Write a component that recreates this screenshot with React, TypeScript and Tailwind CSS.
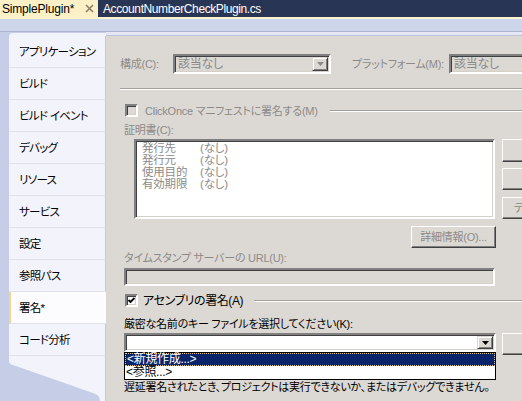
import React from "react";

const DIS = "text-[#8c8a88]";

function Arrow({ color }: { color: string }) {
  return (
    <svg width="7" height="4" viewBox="0 0 7 4">
      <polygon points="0,0 7,0 3.5,4" fill={color} />
    </svg>
  );
}

function DropBtn({ disabled }: { disabled?: boolean }) {
  return (
    <div className="w-[16px] h-full shrink-0 bg-[#dcd9d4] border border-t-[#dcd9d4] border-l-[#dcd9d4] border-r-[#404040] border-b-[#404040] shadow-[inset_1px_1px_0_#ffffff,inset_-1px_-1px_0_#808080] flex items-center justify-center">
      <Arrow color={disabled ? "#8c8a88" : "#000000"} />
    </div>
  );
}

function Checkbox({ checked }: { checked?: boolean }) {
  return (
    <div
      className={
        "w-[13px] h-[13px] shrink-0 border-2 border-t-[#808080] border-l-[#808080] border-b-white border-r-white shadow-[inset_1px_1px_0_#404040,inset_-1px_-1px_0_#d4d0c8] flex items-center justify-center " +
        (checked ? "bg-white" : "bg-[#dcd9d4]")
      }
    >
      {checked && (
        <svg width="9" height="9" viewBox="0 0 9 9">
          <path d="M1.5 4 L3.5 6 L7.5 2" stroke="#000" strokeWidth="1.8" fill="none" />
        </svg>
      )}
    </div>
  );
}

const navItems = [
  "アプリケーション",
  "ビルド",
  "ビルド イベント",
  "デバッグ",
  "リソース",
  "サービス",
  "設定",
  "参照パス",
  "署名*",
  "コード分析",
];

export default function App() {
  return (
    <div className="w-[522px] h-[401px] overflow-hidden flex flex-col bg-[#c6cee7] font-['Liberation_Sans','Noto_Sans_CJK_JP',sans-serif] [font-feature-settings:'palt'] text-[11px] tracking-[-0.25px] leading-[14px] text-black whitespace-nowrap">
      {/* document tabs */}
      <div className="h-[17px] shrink-0 flex bg-[#283554]">
        <div className="w-[98px] bg-[#fcf0c6] flex items-center pl-[2px] text-[12px] tracking-[-0.2px]">
          <span>SimplePlugin*</span>
          <svg className="ml-[11px]" width="9" height="9" viewBox="0 0 9 9">
            <path d="M1 1 L8 8 M8 1 L1 8" stroke="#8a806a" strokeWidth="1.6" />
          </svg>
        </div>
        <div className="pl-[5px] text-white flex items-center text-[12px] tracking-[-0.4px]">
          AccountNumberCheckPlugin.cs
        </div>
      </div>
      <div className="h-[2px] shrink-0 bg-[#fdf3cf]" />
      <div className="h-[12px] shrink-0 bg-[#cdd5ea]" />
      <div className="h-px shrink-0 bg-[#aab3cf]" />

      <div className="flex-1 flex min-h-0">
        {/* nav */}
        <div className="w-[106px] shrink-0 flex flex-col text-[11.5px] tracking-[-0.7px]">
          <div className="h-px shrink-0" />
          <div className="ml-[9px] flex flex-col bg-[#f3f3fb] rounded-tl-[4px] pt-[3px]">
            {navItems.map((t) => {
              const sel = t === "署名*";
              return (
                <div
                  key={t}
                  className={
                    "h-[32px] shrink-0 flex items-center border-b border-b-[#e0e1ee] " +
                    (sel
                      ? "bg-[#fcfcff] border-l-2 border-l-[#f2d68c] pl-[8px]"
                      : "pl-[10px] border-r border-r-[#c3c9de]")
                  }
                >
                  {t}
                </div>
              );
            })}
          </div>
          <svg className="ml-[9px] shrink-0" width="97" height="45" viewBox="0 0 97 45">
            <path
              d="M0 0 L0 5 Q0 8 4 9 L84 37 Q91 39 91 45 L97 45 L97 0 Z"
              fill="#f3f3fb"
            />
            <path d="M96.5 0 L96.5 45" stroke="#c3c9de" strokeWidth="1" />
          </svg>
        </div>

        {/* content */}
        <div className="flex-1 flex flex-col min-w-0">
          <div className="h-[4px] shrink-0 bg-[#e6e7f6] border-b border-b-[#bcc2d8]" />
          <div className="flex-1 bg-[#dcd9d4] pl-[14px] flex flex-col overflow-hidden">
            {/* row 1 */}
            <div className="mt-[18px] h-[20px] flex items-center shrink-0">
              <span className={"w-[53px] shrink-0 " + DIS}>構成(C):</span>
              <div className="w-[158px] h-[20px] shrink-0 flex items-center border-2 border-t-[#808080] border-l-[#808080] border-b-white border-r-white shadow-[inset_1px_1px_0_#404040,inset_-1px_-1px_0_#d4d0c8] p-[1px]">
                <span className={"flex-1 pl-[2px] text-[12px] " + DIS}>該当なし</span>
                <DropBtn disabled />
              </div>
              <span className={"ml-[21px] w-[97px] shrink-0 " + DIS}>プラットフォーム(M):</span>
              <div className="w-[120px] h-[20px] shrink-0 flex items-center border-2 border-t-[#808080] border-l-[#808080] border-b-white border-r-white shadow-[inset_1px_1px_0_#404040,inset_-1px_-1px_0_#d4d0c8] p-[1px]">
                <span className={"flex-1 pl-[2px] text-[12px] " + DIS}>該当なし</span>
              </div>
            </div>

            <div className="mt-[14px] h-[2px] shrink-0 border-t border-t-[#a09e9a] border-b border-b-white" />

            {/* ClickOnce */}
            <div className="mt-[14px] h-[13px] shrink-0 flex items-center pl-[5px]">
              <Checkbox />
              <span className={"ml-[7px] shrink-0 " + DIS}>ClickOnce マニフェストに署名する(M)</span>
              <div className="ml-[12px] flex-1 h-[2px] border-t border-t-[#a09e9a] border-b border-b-white" />
            </div>

            <div className={"mt-[6px] h-[14px] shrink-0 pl-[4px] " + DIS}>証明書(C):</div>

            <div className="mt-[2px] flex shrink-0">
              <div className="ml-[14px] w-[361px] h-[80px] shrink-0 bg-white border-2 border-t-[#808080] border-l-[#808080] border-b-white border-r-white shadow-[inset_1px_1px_0_#404040,inset_-1px_-1px_0_#d4d0c8] pt-[1px] pl-[6px] leading-[12px] text-[11.5px] tracking-[-0.2px]">
                {[
                  ["発行先", "(なし)"],
                  ["発行元", "(なし)"],
                  ["使用目的", "(なし)"],
                  ["有効期限", "(なし)"],
                ].map(([a, b]) => (
                  <div key={a} className={"flex h-[12px] " + DIS}>
                    <span className="w-[58px] shrink-0">{a}</span>
                    <span>{b}</span>
                  </div>
                ))}
              </div>
              <div className="ml-[7px] flex flex-col shrink-0">
                <div className="h-[23px] w-[130px] bg-[#dcd9d4] border border-t-white border-l-white border-r-[#404040] border-b-[#404040] shadow-[inset_-1px_-1px_0_#808080] flex items-center pl-[30px]">
                  <span className={DIS}>ストアから選択(S)...</span>
                </div>
                <div className="mt-[6px] h-[22px] w-[130px] bg-[#dcd9d4] border border-t-white border-l-white border-r-[#404040] border-b-[#404040] shadow-[inset_-1px_-1px_0_#808080] flex items-center pl-[30px]">
                  <span className={DIS}>ファイルから選択(I)...</span>
                </div>
                <div className="mt-[7px] h-[22px] w-[130px] bg-[#dcd9d4] border border-t-white border-l-white border-r-[#404040] border-b-[#404040] shadow-[inset_-1px_-1px_0_#808080] flex items-center pl-[11px]">
                  <span className={DIS}>テスト証明書の作成(T)...</span>
                </div>
              </div>
            </div>

            <div className="mt-[7px] ml-[291px] h-[22px] w-[85px] shrink-0 bg-[#dcd9d4] border border-t-white border-l-white border-r-[#404040] border-b-[#404040] shadow-[inset_-1px_-1px_0_#808080] flex items-center justify-center">
              <span className={DIS}>詳細情報(O)...</span>
            </div>

            <div className={"mt-[3px] h-[14px] shrink-0 pl-[4px] " + DIS}>タイムスタンプ サーバーの URL(U):</div>
            <div className="mt-[3px] ml-[4px] h-[18px] w-[371px] shrink-0 bg-[#dcd9d4] border-2 border-t-[#808080] border-l-[#808080] border-b-white border-r-white shadow-[inset_1px_1px_0_#404040,inset_-1px_-1px_0_#d4d0c8]" />

            {/* assembly sign */}
            <div className="mt-[8px] h-[13px] shrink-0 flex items-center pl-[5px]">
              <Checkbox checked />
              <span className="ml-[5px] shrink-0 text-[12px] tracking-[-0.4px]">アセンブリの署名(A)</span>
              <div className="ml-[11px] flex-1 h-[2px] border-t border-t-[#a09e9a] border-b border-b-white" />
            </div>

            <div className="mt-[10px] h-[14px] shrink-0 pl-[4px]">厳密な名前のキー ファイルを選択してください(K):</div>

            <div className="mt-[2px] flex shrink-0 relative">
              <div className="ml-[4px] w-[372px] h-[19px] shrink-0 bg-white flex border-2 border-t-[#808080] border-l-[#808080] border-b-white border-r-white shadow-[inset_1px_1px_0_#404040,inset_-1px_-1px_0_#d4d0c8] p-[1px] justify-end">
                <DropBtn />
              </div>
              <div className="ml-[6px] h-[22px] w-[40px] shrink-0 bg-[#dcd9d4] border border-t-white border-l-white border-r-[#404040] border-b-[#404040] shadow-[inset_-1px_-1px_0_#808080]" />
              <div className="absolute left-[4px] top-[19px] w-[372px] h-[28px] bg-white border border-black flex flex-col text-[12px] tracking-[-0.3px]">
                <div className="h-[13px] bg-[#0a246a] text-white border border-dotted border-[#d9c88a] leading-[11px] pl-px">
                  &lt;新規作成...&gt;
                </div>
                <div className="h-[13px] leading-[13px] pl-[1px]">&lt;参照...&gt;</div>
              </div>
            </div>

            <div className="mt-[25px] h-[14px] shrink-0 pl-[4px]">
              遅延署名されたとき、プロジェクトは実行できないか、またはデバッグできません。
            </div>
          </div>
        </div>
      </div>
    </div>
  );
}
